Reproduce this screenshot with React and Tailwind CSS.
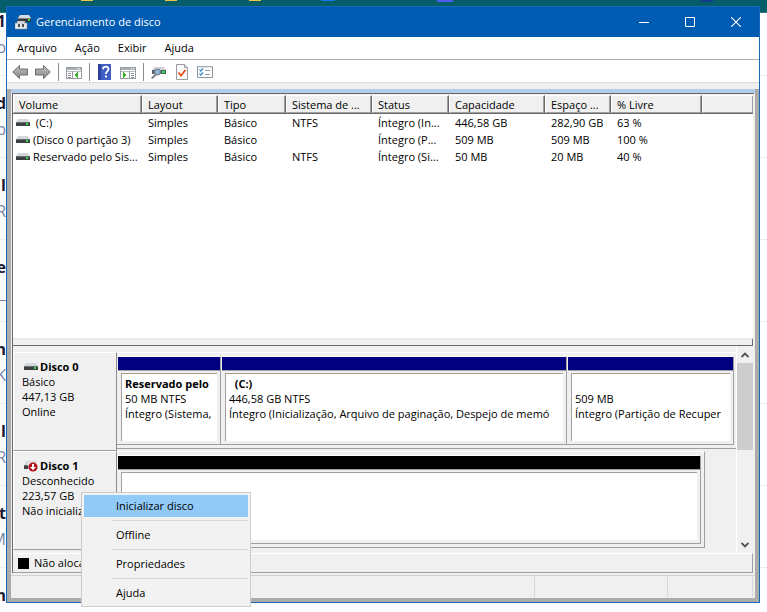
import React from 'react';
import { clsx } from 'clsx';

const columns = [
  { label: 'Volume', width: 'w-[129px]' },
  { label: 'Layout', width: 'w-[76px]' },
  { label: 'Tipo', width: 'w-[68px]' },
  { label: 'Sistema de ...', width: 'w-[86px]' },
  { label: 'Status', width: 'w-[77px]' },
  { label: 'Capacidade', width: 'w-[96px]' },
  { label: 'Espaço ...', width: 'w-[66px]' },
  { label: '% Livre', width: 'w-[91px]' },
  { label: '', width: '' },
];

const volumes = [
  ['\u00a0(C:)', 'Simples', 'Básico', 'NTFS', 'Íntegro (In...', '446,58 GB', '282,90 GB', '63 %', ''],
  ['(Disco 0 partição 3)', 'Simples', 'Básico', '', 'Íntegro (P...', '509 MB', '509 MB', '100 %', ''],
  ['Reservado pelo Sis...', 'Simples', 'Básico', 'NTFS', 'Íntegro (Si...', '50 MB', '20 MB', '40 %', ''],
];

const disks = [
  {
    name: 'Disco 0',
    lines: ['Básico', '447,13 GB', 'Online'],
    partitions: [
      { grow: 'grow-[102]', name: 'Reservado pelo', size: '50 MB NTFS', status: 'Íntegro (Sistema,' },
      {
        grow: 'grow-[344]',
        name: '\u00a0\u00a0(C:)',
        size: '446,58 GB NTFS',
        status: 'Íntegro (Inicialização, Arquivo de paginação, Despejo de memó',
      },
      { grow: 'grow-[165]', name: '\u00a0', size: '509 MB', status: 'Íntegro (Partição de Recuper' },
    ],
  },
  {
    name: 'Disco 1',
    offline: true,
    lines: ['Desconhecido', '223,57 GB', 'Não inicializado'],
    partitions: [{ grow: 'grow', unallocated: true }],
  },
];

const menuItems = ['Inicializar disco', 'Offline', 'Propriedades', 'Ajuda'];

const pageItems = [
  ['1', 'o'],
  ['d', 'ip'],
  ['l', 'R'],
  ['e', '_'],
  ['n', 'K'],
  ['l', 'R'],
  ['t', 'M'],
  ['n', ''],
];

const DriveIcon = ({ offline }) => (
  <svg width="14" height="12" viewBox="0 0 14 12" className="shrink-0" aria-hidden="true">
    <path d="M2 2h10l2 3H0z" fill="#d4d7da" />
    <rect y="5" width="14" height="4" fill="#3c4043" />
    <rect y="5" width="14" height="1" fill="#6b6f73" />
    <rect x="10" y="6" width="2" height="2" fill="#2fe04a" />
    {offline && (
      <>
        <rect x="4" y="2" width="10" height="10" fill="#f0f0f0" />
        <path d="M2 1h11v2H1z" fill="#d9dbdd" />
        <circle cx="9" cy="7" r="4.600" fill="#b3101d" />
        <path d="M8 4h2v3h2L9 10.300 6 7h2z" fill="#fff" />
      </>
    )}
  </svg>
);

const AppIcon = () => (
  <svg width="16" height="16" viewBox="0 0 16 16" aria-hidden="true">
    <path d="M5 1h9l2 3H3z" fill="#d9dcdf" />
    <path d="M3 4h13v4H3z" fill="#33383c" />
    <path d="M3 4h13v1H3z" fill="#7b8186" />
    <rect x="13" y="5" width="2" height="2" fill="#32d74b" />
    <path d="M2 7h8v3H2z" fill="#f4f4f4" stroke="#4b5157" strokeWidth=".5" />
    <path d="M0 9h12v6H0z" fill="#e6e8ea" stroke="#8d949b" strokeWidth=".5" />
    <path d="M3 10h2v3H3zM7 10h2v3H7z" fill="#4b5157" />
  </svg>
);

const ArrowIcon = ({ flip }) => (
  <svg width="16" height="16" viewBox="0 0 16 16" className={clsx(flip && '-scale-x-100')} aria-hidden="true">
    <defs>
      <linearGradient id="arrow" x1="0" y1="0" x2="0" y2="1">
        <stop offset="0" stopColor="#c4c4c4" />
        <stop offset="1" stopColor="#858585" />
      </linearGradient>
    </defs>
    <path
      d="M.7 8 7.500 1.500V5H15.500V11H7.500V14.500Z"
      fill="url(#arrow)"
      stroke="#6f6f6f"
      strokeLinejoin="round"
    />
  </svg>
);

const PaneIcon = ({ flip }) => (
  <svg width="16" height="16" viewBox="0 0 16 16" shapeRendering="crispEdges" aria-hidden="true">
    <rect x="0" y="3" width="16" height="12" fill="#fff" />
    <path d="M.5 3.500h15v11H.5z" fill="none" stroke="#979ca1" />
    <rect x="1" y="4" width="14" height="2" fill="#a9aeb3" />
    <rect x="11" y="4" width="1" height="1" fill="#fff" />
    <rect x="13" y="4" width="1" height="1" fill="#fff" />
    <rect x="1" y="7" width="14" height="1" fill="#b8bcc0" />
    {flip ? (
      <>
        <rect x="9" y="7" width="1" height="7" fill="#979ca1" />
        <path d="M11 9h3v1h-3zM11 11h3v1h-3zM11 13h3v1h-3z" fill="#8b9096" />
        <path d="M3 8 7 11 3 14z" fill="#3fae29" />
      </>
    ) : (
      <>
        <rect x="6" y="7" width="1" height="7" fill="#979ca1" />
        <path d="M2 9h3v1H2zM2 11h3v1H2zM2 13h3v1H2z" fill="#8b9096" />
        <path d="M12 8 8 11 12 14z" fill="#3fae29" />
      </>
    )}
  </svg>
);

const HelpIcon = () => (
  <svg width="16" height="16" viewBox="0 0 16 16" aria-hidden="true">
    <rect x="1" y="0" width="13" height="16" fill="#3f5fc4" />
    <rect x="1" y="0" width="3" height="16" fill="#2a429e" />
    <path d="M6 5.200C6 1.700 11.500 1.800 11.500 5c0 2.300-2.700 2.400-2.700 5" fill="none" stroke="#fff" strokeWidth="1.800" />
    <rect x="8" y="11.500" width="2" height="2" fill="#fff" />
  </svg>
);

const RescanIcon = () => (
  <svg width="16" height="16" viewBox="0 0 16 16" aria-hidden="true">
    <path d="M3 3h10l2 3H1z" fill="#d0d4d7" />
    <rect x="1" y="6" width="14" height="4" fill="#5b6166" />
    <rect x="11" y="7" width="3" height="2" fill="#25e045" />
    <path d="M.7 14.300 5 10.500" stroke="#70777d" strokeWidth="1.800" />
    <circle cx="6.500" cy="8" r="3" fill="#8db5d3" stroke="#6c7a86" />
  </svg>
);

const CheckPageIcon = () => (
  <svg width="16" height="16" viewBox="0 0 16 16" aria-hidden="true">
    <path d="M2.500.5h8l3 3v12h-11z" fill="#fafafa" stroke="#9a9a9a" />
    <path d="M10.500.5v3h3" fill="#e4e4e4" stroke="#9a9a9a" />
    <path d="m4.500 8.500 2.500 3 4.500-5.500" fill="none" stroke="#ea4f1c" strokeWidth="1.800" />
  </svg>
);

const TaskListIcon = () => (
  <svg width="16" height="16" viewBox="0 0 16 16" aria-hidden="true">
    <path d="M.5 2.500h15v11H.5z" fill="#fff" stroke="#8f959a" />
    <path d="M1 3h14" stroke="#c3c7ca" />
    <path d="m2.500 5.500 1.200 1.500 2.500-2.500M2.500 9.500l1.200 1.500 2.500-2.500" fill="none" stroke="#2f87d6" strokeWidth="1.200" />
    <path d="M8 6.500h5M8 10.500h5" stroke="#9da2a6" />
  </svg>
);

const toolGroups = [
  [
    { label: 'Voltar', icon: <ArrowIcon /> },
    { label: 'Avançar', icon: <ArrowIcon flip /> },
  ],
  [{ label: 'Mostrar árvore', icon: <PaneIcon /> }],
  [
    { label: 'Ajuda', icon: <HelpIcon /> },
    { label: 'Mostrar painel', icon: <PaneIcon flip /> },
  ],
  [
    { label: 'Examinar discos', icon: <RescanIcon /> },
    { label: 'Verificar', icon: <CheckPageIcon /> },
    { label: 'Tarefas', icon: <TaskListIcon /> },
  ],
];

const PageBehind = () => (
  <div className="absolute inset-0 isolate overflow-hidden bg-white" aria-hidden="true">
    <div className="absolute inset-x-0 top-0 z-10 h-[13px] overflow-hidden border-b border-[#2b7a80] bg-[#045d68]">
      <div className="flex gap-[72px] pl-[81px]">
        <span className="h-px w-3 bg-[#e9c44b]" />
        <span className="h-px w-3 bg-[#e9c44b]" />
        <span className="h-px w-3 bg-[#e9c44b]" />
        <span className="-ml-3 h-px w-3.5 bg-[#1a73e8]" />
        <span className="ml-[30px] h-0.5 w-4 bg-[#4f5bea]" />
        <span className="ml-44 h-0.5 w-3 bg-[#123a8c]" />
      </div>
    </div>
    <div className="-mt-1.5">
      {pageItems.map(([title, sub], i) => (
        <div key={i} className="h-[82px] border-b border-[#ececf0] pt-[15px]">
          <div className="flex w-1.5 flex-col items-end">
            <span className="text-base leading-6 font-bold text-[#1d1a33]">{title}</span>
            <span className="text-base leading-7 text-[#7484a8]">{sub}</span>
          </div>
        </div>
      ))}
    </div>
  </div>
);

const TitleBar = () => (
  <header className="flex h-[30px] shrink-0 items-center bg-[#005bb3] pl-2 text-white">
    <AppIcon />
    <h1 className="ml-[5px] grow">Gerenciamento de disco</h1>
    <button aria-label="Minimizar" className="flex h-full w-[46px] items-center justify-center">
      <svg width="10" height="10" viewBox="0 0 10 10">
        <path d="M0 5.500h10" stroke="#fff" />
      </svg>
    </button>
    <button aria-label="Maximizar" className="flex h-full w-[46px] items-center justify-center">
      <svg width="10" height="10" viewBox="0 0 10 10">
        <path d="M.5.5h9v9h-9z" fill="none" stroke="#fff" />
      </svg>
    </button>
    <button aria-label="Fechar" className="flex h-full w-[46px] items-center justify-center">
      <svg width="10" height="10" viewBox="0 0 10 10">
        <path d="m0 0 10 10M10 0 0 10" stroke="#fff" strokeWidth="1.100" />
      </svg>
    </button>
  </header>
);

const Toolbar = () => (
  <div className="flex h-[23px] shrink-0 items-center gap-[7px] border-b border-[#dcdcdc] bg-white px-[5px] pt-0.5">
    {toolGroups.map((group, i) => (
      <React.Fragment key={i}>
        {i > 0 && <span className="h-[18px] w-px bg-[#8c8c8c]" />}
        {group.map((tool) => (
          <button key={tool.label} aria-label={tool.label}>
            {tool.icon}
          </button>
        ))}
      </React.Fragment>
    ))}
  </div>
);

const VolumeTable = () => (
  <div className="grow overflow-hidden bg-white">
    <table className="w-full table-fixed border-separate border-spacing-0 text-left">
      <thead>
        <tr>
          {columns.map((col, i) => (
            <th
              key={i}
              className={clsx(
                'h-[19px] overflow-hidden border-t border-r border-b border-t-white border-r-[#696969] border-b-[#696969] bg-[#f0f0f0] p-0 font-normal whitespace-nowrap last:border-r-0',
                col.width
              )}
            >
              <div className="h-[17px] border-r border-b border-l border-r-[#a0a0a0] border-b-[#a0a0a0] border-l-white pl-[5px] leading-[18px]">
                {col.label}
              </div>
            </th>
          ))}
        </tr>
      </thead>
      <tbody>
        {volumes.map((row, i) => (
          <tr key={i}>
            {row.map((cell, j) => (
              <td key={j} className={clsx('h-[17px] p-0 whitespace-nowrap', j > 0 && 'pl-1.5')}>
                {j === 0 ? (
                  <div className="flex items-center gap-[3px] pl-[3px]">
                    <DriveIcon />
                    {cell}
                  </div>
                ) : (
                  cell
                )}
              </td>
            ))}
          </tr>
        ))}
      </tbody>
    </table>
  </div>
);

const Partition = ({ partition }) => (
  <div
    className={clsx(
      'flex min-w-0 basis-0 flex-col border-t border-r border-b border-t-white border-r-[#a0a0a0] border-b-[#a0a0a0] pl-px',
      partition.grow
    )}
  >
    <div className={clsx('h-[13px]', partition.unallocated ? 'bg-black' : 'bg-[#000080]')} />
    <div className="h-px bg-[#a0a0a0]" />
    <div className="mx-[3px] mt-0.5 mb-[3px] h-[68px] border-t border-l border-[#a0a0a0] bg-white px-[3px] pt-0.5">
      {!partition.unallocated && (
        <div className="overflow-hidden leading-[15px] whitespace-nowrap">
          <p className="font-bold">{partition.name}</p>
          <p>{partition.size}</p>
          <p>{partition.status}</p>
        </div>
      )}
    </div>
  </div>
);

const DiskRow = ({ disk }) => (
  <div className="flex h-[99px]">
    <div className="w-[104px] shrink-0 overflow-hidden border border-t-white border-r-[#8c8c8c] border-b-[#a0a0a0] border-l-white pt-1.5 pl-2 leading-[15px] whitespace-nowrap">
      <p className="flex items-center gap-0.5 pl-0.5 font-bold">
        <DriveIcon offline={disk.offline} />
        {disk.name}
      </p>
      {disk.lines.map((line) => (
        <p key={line}>{line}</p>
      ))}
    </div>
    <div
      className={clsx(
        'mb-0.5 flex min-w-0 grow border-t border-b border-t-white border-b-[#a0a0a0] py-[3px]',
        disk.offline ? 'mr-[31px] border-r border-r-[#a0a0a0] pr-[3px]' : 'pr-0.5'
      )}
    >
      {disk.partitions.map((partition, i) => (
        <Partition key={i} partition={partition} />
      ))}
    </div>
  </div>
);

const ScrollBar = () => (
  <div className="flex w-[17px] shrink-0 flex-col items-center border-l border-white bg-[#f0f0f0]">
    <button aria-label="Rolar para cima" className="flex h-[17px] items-center">
      <svg width="8" height="6" viewBox="0 0 8 6">
        <path d="m.5 5 3.500-3.500L7.500 5" fill="none" stroke="#505050" strokeWidth="1.800" />
      </svg>
    </button>
    <div className="h-[87px] w-full bg-[#cdcdcd]" />
    <button aria-label="Rolar para baixo" className="mt-auto flex h-[17px] items-center">
      <svg width="8" height="6" viewBox="0 0 8 6">
        <path d="M.5 1 4 4.500 7.500 1" fill="none" stroke="#505050" strokeWidth="1.800" />
      </svg>
    </button>
  </div>
);

const ContextMenu = () => (
  <div
    role="menu"
    className="absolute top-[492px] left-[81px] z-20 w-[170px] border border-[#cccccc] bg-[#f2f2f2] p-0.5"
  >
    {menuItems.map((item, i) => (
      <React.Fragment key={item}>
        {i > 0 && <div className="my-[3px] ml-7 h-px bg-[#d7d7d7]" />}
        <button
          role="menuitem"
          className={clsx('block h-[22px] w-full pl-8 text-left', i === 0 && 'bg-[#91c9f7]')}
        >
          {item}
        </button>
      </React.Fragment>
    ))}
  </div>
);

const App = () => (
  <div className="relative flex h-screen min-h-[480px] flex-col overflow-hidden pt-1.5 pr-[7px] pb-[9px] pl-1.5 font-['Open_Sans','Noto_Sans',sans-serif] text-[11px] leading-4 text-black">
    <PageBehind />

    <main className="relative flex min-h-0 grow flex-col border border-[#1868b7] bg-[#f0f0f0]">
      <TitleBar />
      <nav className="flex h-[23px] shrink-0 items-center gap-[18px] border-b border-[#b0b0b4] bg-white px-2.5">
        <button>Arquivo</button>
        <button>Ação</button>
        <button>Exibir</button>
        <button>Ajuda</button>
      </nav>
      <Toolbar />

      <div className="mt-1.5 flex min-h-0 grow flex-col border-x-4 border-b-4 border-[#ababab]">
        <div className="h-1 shrink-0 bg-[#b4cce8]" />
        <div className="mx-px flex min-h-0 grow flex-col border-t border-l border-[#696969] pt-px pr-px">
          <VolumeTable />
          {/* Splitter */}
          <div className="h-2 shrink-0 border-t-2 border-r border-b border-t-[#e8e8e8] border-r-[#696969] border-b-[#696969] bg-[#f0f0f0]" />

          <div className="flex shrink-0">
            <div className="min-w-0 grow pt-1.5 pb-[3px]">
              {disks.map((disk) => (
                <DiskRow key={disk.name} disk={disk} />
              ))}
            </div>
            <ScrollBar />
          </div>
          <div className="flex h-5 shrink-0 items-center gap-[5px] border-t border-r border-b border-t-white border-r-[#a0a0a0] border-b-[#a0a0a0] pl-[5px]">
            <span className="size-[11px] bg-black" />
            Não alocado
          </div>
        </div>
        <footer className="mt-0.5 flex h-[23px] shrink-0 border-t border-[#d0d0d0] pt-px pr-0.5 pb-px">
          <div className="grow border-r border-[#d7d7d7]" />
          <div className="w-[133px] border-r border-[#d7d7d7]" />
          <div className="w-[85px] border-r border-[#d7d7d7]" />
        </footer>
      </div>
    </main>

    <ContextMenu />
  </div>
);

export default App;
